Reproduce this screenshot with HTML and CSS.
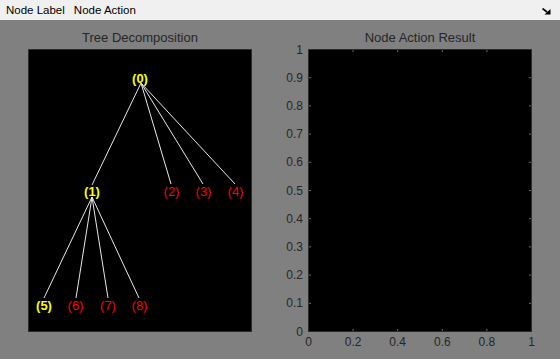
FILE: index.html
```html
<!DOCTYPE html>
<html>
<head>
<meta charset="utf-8">
<link rel="stylesheet" href="styles.css">
</head>
<body>
<div class="menubar">
  <span class="menu-item">Node Label</span>
  <span class="menu-item">Node Action</span>
  <span class="spacer"></span>
  <svg class="dock" width="9" height="7" viewBox="0 0 9 7">
    <path d="M0.5 0.5 L5 4" stroke="#000" stroke-width="1.6" fill="none"/>
    <path d="M2.5 6.5 L8.5 6.5 L8.5 1 Z" fill="#000"/>
  </svg>
</div>
<div class="figure">
  <div class="panel">
    <div class="title">Tree Decomposition</div>
    <div class="axes">
      <svg class="plot" width="224" height="283" viewBox="0 0 224 283">
        <rect x="0.5" y="0.5" width="223" height="282" fill="#000" stroke="#2b2b2b"/>
        <g stroke="#e8e8e8" stroke-width="1" fill="none">
          <line x1="113" y1="34" x2="64" y2="136"/>
          <line x1="113" y1="34" x2="143" y2="135"/>
          <line x1="113" y1="34" x2="175" y2="135"/>
          <line x1="113" y1="34" x2="207" y2="135"/>
          <line x1="64" y1="148" x2="16" y2="249"/>
          <line x1="64" y1="148" x2="48" y2="249"/>
          <line x1="64" y1="148" x2="80" y2="249"/>
          <line x1="64" y1="148" x2="111" y2="249"/>
        </g>
        <g class="nodes">
          <text class="sel" x="112" y="29">(0)</text>
          <text class="sel" x="64" y="142">(1)</text>
          <text class="red" x="143.5" y="142">(2)</text>
          <text class="red" x="175.5" y="142">(3)</text>
          <text class="red" x="207.5" y="142">(4)</text>
          <text class="sel" x="16" y="256">(5)</text>
          <text class="red" x="47.5" y="256">(6)</text>
          <text class="red" x="80" y="256">(7)</text>
          <text class="red" x="111.5" y="256">(8)</text>
        </g>
      </svg>
    </div>
  </div>
  <div class="panel">
    <div class="title">Node Action Result</div>
    <div class="axes">
      <svg class="plot" width="224" height="283" viewBox="0 0 224 283">
        <rect x="0.5" y="0.5" width="223" height="282" fill="#000" stroke="#2b2b2b"/>
        <g stroke="#6a6a6a" stroke-width="1">
          <path d="M1 28.7h2 M1 56.9h2 M1 85.1h2 M1 113.3h2 M1 141.5h2 M1 169.7h2 M1 197.9h2 M1 226.1h2 M1 254.3h2"/>
          <path d="M223 28.7h-2 M223 56.9h-2 M223 85.1h-2 M223 113.3h-2 M223 141.5h-2 M223 169.7h-2 M223 197.9h-2 M223 226.1h-2 M223 254.3h-2"/>
          <path d="M45.1 1v2 M89.7 1v2 M134.3 1v2 M178.9 1v2"/>
          <path d="M45.1 282v-2 M89.7 282v-2 M134.3 282v-2 M178.9 282v-2"/>
        </g>
        <g class="ylab">
          <text x="-5" y="0.5">1</text>
          <text x="-5" y="28.7">0.9</text>
          <text x="-5" y="56.9">0.8</text>
          <text x="-5" y="85.1">0.7</text>
          <text x="-5" y="113.3">0.6</text>
          <text x="-5" y="141.5">0.5</text>
          <text x="-5" y="169.7">0.4</text>
          <text x="-5" y="197.9">0.3</text>
          <text x="-5" y="226.1">0.2</text>
          <text x="-5" y="254.3">0.1</text>
          <text x="-5" y="282.5">0</text>
        </g>
        <g class="xlab">
          <text x="0.5" y="293">0</text>
          <text x="45.1" y="293">0.2</text>
          <text x="89.7" y="293">0.4</text>
          <text x="134.3" y="293">0.6</text>
          <text x="178.9" y="293">0.8</text>
          <text x="223.5" y="293">1</text>
        </g>
      </svg>
    </div>
  </div>
</div>
</body>
</html>
```

FILE: styles.css
```css
html, body {
  margin: 0;
  padding: 0;
  background: #808080;
  width: 560px;
  height: 359px;
  overflow: hidden;
  font-family: "Liberation Sans", Arial, sans-serif;
}
.menubar {
  height: 20px;
  background: #f0f0f0;
  display: flex;
  align-items: center;
  padding-left: 6px;
  padding-right: 9px;
  box-sizing: border-box;
  font-size: 11.5px;
  color: #000;
}
.menu-item {
  margin-right: 9px;
  line-height: 20px;
  padding-bottom: 1px;
}
.spacer {
  flex: 1;
}
.dock {
  display: block;
  margin-top: 2px;
}
.figure {
  display: flex;
  padding-left: 28px;
  gap: 56px;
}
.panel {
  display: flex;
  flex-direction: column;
  width: 224px;
}
.title {
  height: 29px;
  box-sizing: border-box;
  padding-top: 10px;
  line-height: 16px;
  font-size: 13px;
  color: #262626;
  text-align: center;
}
.axes {
  width: 224px;
  height: 283px;
}
.plot {
  display: block;
  overflow: visible;
}
.nodes text {
  font-family: "Liberation Sans", Arial, sans-serif;
  font-size: 13px;
  text-anchor: middle;
  dominant-baseline: central;
}
.nodes .sel {
  fill: #ffff00;
  font-weight: bold;
}
.nodes .red {
  fill: #ff0000;
}
.ylab text, .xlab text {
  font-family: "Liberation Sans", Arial, sans-serif;
  font-size: 12px;
  fill: #262626;
  dominant-baseline: central;
}
.ylab text {
  text-anchor: end;
}
.xlab text {
  text-anchor: middle;
}
```
